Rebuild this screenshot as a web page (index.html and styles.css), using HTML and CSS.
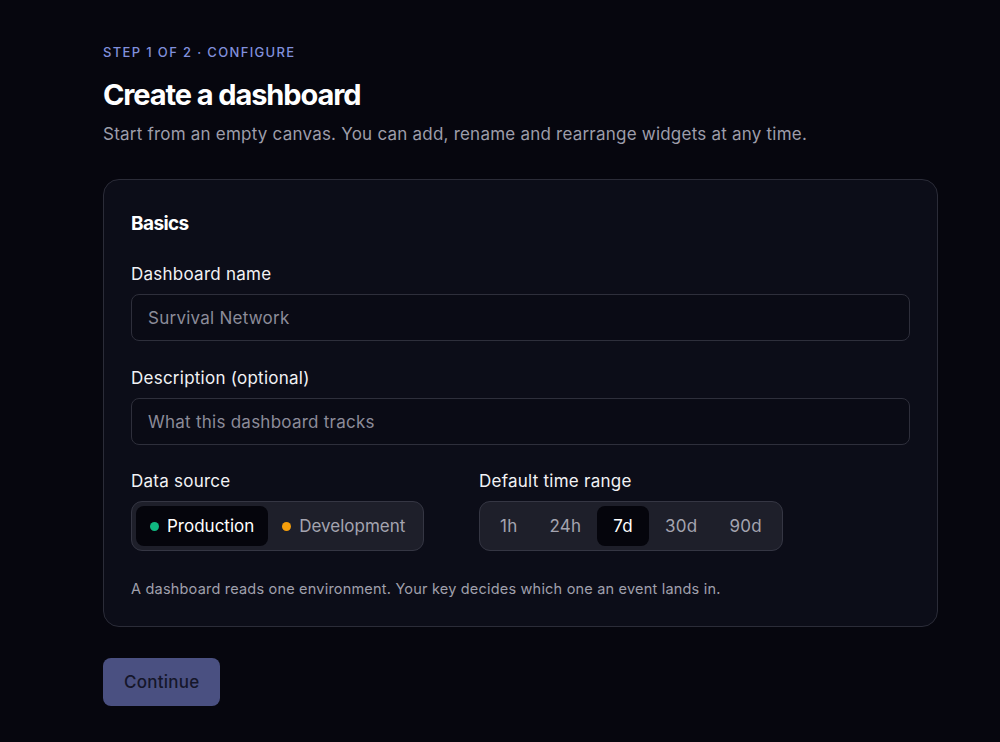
FILE: index.html
```html
<!DOCTYPE html>
<html lang="en">
<head>
<meta charset="utf-8">
<title>Create a dashboard</title>
<link rel="stylesheet" href="styles.css">
</head>
<body>
<main class="page">
  <div class="eyebrow">STEP 1 OF 2 · CONFIGURE</div>
  <h1 class="title">Create a dashboard</h1>
  <p class="subtitle">Start from an empty canvas. You can add, rename and rearrange widgets at any time.</p>

  <section class="card">
    <h2 class="card-title">Basics</h2>

    <div class="field">
      <label class="label">Dashboard name</label>
      <div class="input">Survival Network</div>
    </div>

    <div class="field">
      <label class="label">Description (optional)</label>
      <div class="input">What this dashboard tracks</div>
    </div>

    <div class="row">
      <div class="field">
        <label class="label">Data source</label>
        <div class="segmented">
          <span class="seg active"><span class="dot green"></span>Production</span>
          <span class="seg"><span class="dot orange"></span>Development</span>
        </div>
      </div>
      <div class="field">
        <label class="label">Default time range</label>
        <div class="segmented">
          <span class="seg small">1h</span>
          <span class="seg small">24h</span>
          <span class="seg small active">7d</span>
          <span class="seg small">30d</span>
          <span class="seg small">90d</span>
        </div>
      </div>
    </div>

    <p class="hint">A dashboard reads one environment. Your key decides which one an event lands in.</p>
  </section>

  <button class="btn">Continue</button>
</main>
</body>
</html>
```

FILE: styles.css
```css
* { box-sizing: border-box; }
html, body { margin: 0; padding: 0; }
body {
  background: #06060e;
  color: #f2f2f5;
  font-family: Inter, "Noto Sans", sans-serif;
  width: 1000px;
  height: 742px;
  overflow: hidden;
}
.page {
  padding: 43px 62px 0 103px;
}
.eyebrow {
  font-size: 13px;
  letter-spacing: 1.35px;
  color: #8190dc;
  font-weight: 500;
  line-height: 18px;
}
.title {
  margin: 16px 0 0;
  font-size: 29px;
  font-weight: 700;
  letter-spacing: -1.1px;
  line-height: 36px;
  color: #ffffff;
}
.subtitle {
  margin: 9px 0 0;
  font-size: 17px;
  letter-spacing: 0.22px;
  color: #9d9daa;
  line-height: 24px;
}
.card {
  margin-top: 33px;
  width: 835px;
  background: #0c0d18;
  border: 1px solid #2b2c38;
  border-radius: 16px;
  padding: 29px 27px 26px 27px;
}
.card-title {
  margin: 0 0 23px;
  font-size: 19px;
  font-weight: 700;
  letter-spacing: -0.6px;
  line-height: 30px;
  color: #ffffff;
}
.field { display: flex; flex-direction: column; }
.field + .field { margin-top: 25px; }
.label {
  font-size: 17px;
  letter-spacing: 0.25px;
  color: #f2f2f5;
  line-height: 24px;
  margin-bottom: 8px;
}
.input {
  height: 47px;
  border: 1px solid #2e2f3b;
  border-radius: 8px;
  background: #0a0b15;
  padding: 0 16px;
  display: flex;
  align-items: center;
  font-size: 17px;
  letter-spacing: 0.25px;
  color: #8c8c99;
}
.row {
  display: grid;
  grid-template-columns: 348px auto;
  margin-top: 24px;
}
.row .field + .field { margin-top: 0; }
.segmented {
  display: inline-flex;
  align-self: flex-start;
  height: 50px;
  padding: 4px;
  background: #1e1f2a;
  border: 1px solid #353643;
  border-radius: 11px;
}
.seg {
  display: inline-flex;
  align-items: center;
  gap: 8px;
  padding: 0 14px;
  font-size: 17px;
  letter-spacing: 0;
  color: #a4a4b0;
  border-radius: 8px;
}
.seg.small { padding: 0 16px; letter-spacing: 0.25px; }
.seg.active {
  background: #05050c;
  color: #ffffff;
}
.dot {
  width: 9px;
  height: 9px;
  border-radius: 50%;
  display: inline-block;
}
.dot.green { background: #10b981; }
.dot.orange { background: #f59e0b; }
.hint {
  margin: 27px 0 0;
  font-size: 14.5px;
  letter-spacing: 0.2px;
  color: #a0a0ac;
  line-height: 22px;
}
.btn {
  margin-top: 31px;
  height: 48px;
  padding: 0 21px;
  border: none;
  border-radius: 8px;
  background: #4a5081;
  color: #15162a;
  font-family: Inter, "Noto Sans", sans-serif;
  font-size: 17px;
  letter-spacing: 0.25px;
  font-weight: 500;
}
```
